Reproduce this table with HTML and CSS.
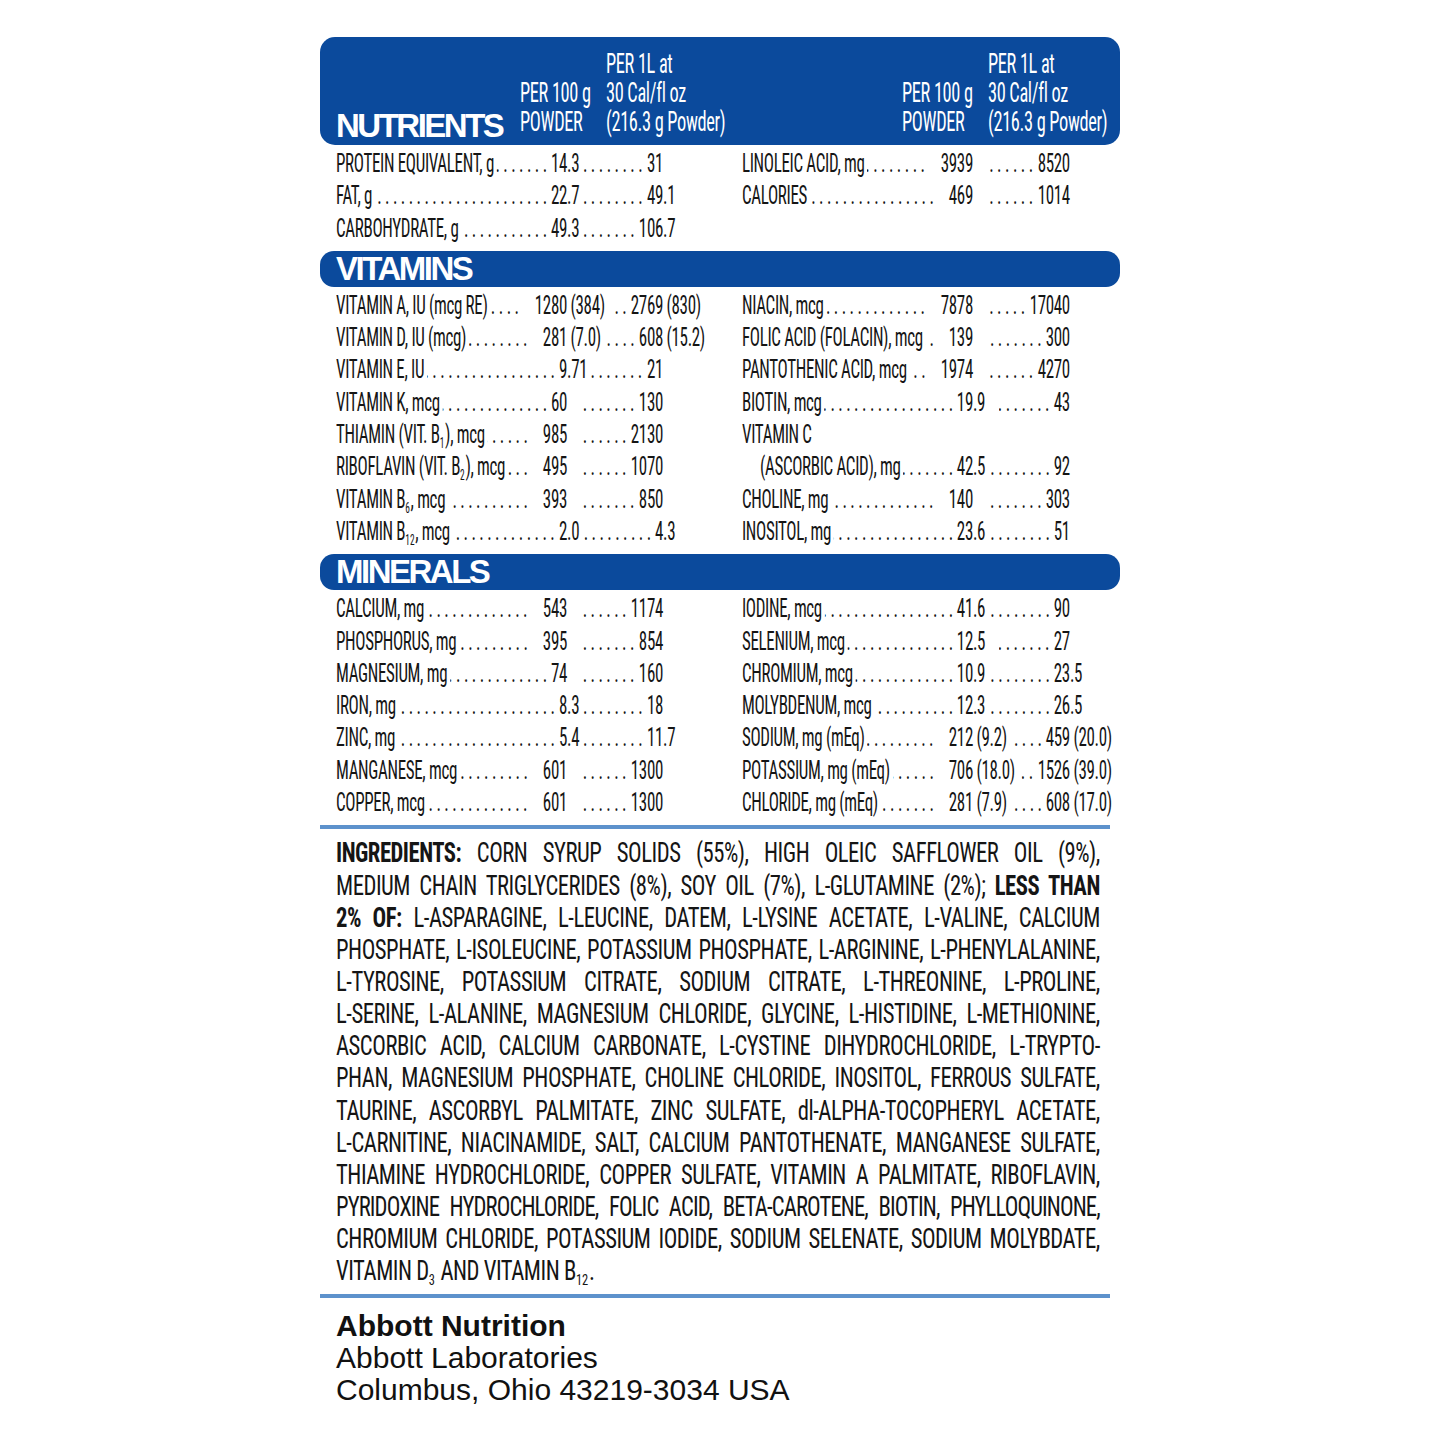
FILE: index.html
```html
<!DOCTYPE html>
<html lang="en">
<head>
<meta charset="utf-8">
<title>Nutrition label</title>
<link rel="stylesheet" href="styles.css">
</head>
<body>
<div class="label">
  <div class="head">
    <div class="title">NUTRIENTS</div>
    <div class="hcol">PER 100 g<br>POWDER</div>
    <div class="hcol">PER 1L at<br>30 Cal/fl oz<br>(216.3 g Powder)</div>
    <div class="hcol">PER 100 g<br>POWDER</div>
    <div class="hcol">PER 1L at<br>30 Cal/fl oz<br>(216.3 g Powder)</div>
  </div>

  <div class="sec">
    <div class="half">
      <div class="row"><div class="c1"><span class="nm">PROTEIN EQUIVALENT, g</span><span class="ld"></span><span class="n">14</span></div><div class="c2"><span class="n">.3</span><span class="ld"></span><span class="n">31</span></div><div class="c3"></div></div>
      <div class="row"><div class="c1"><span class="nm">FAT, g</span><span class="ld"></span><span class="n">22</span></div><div class="c2"><span class="n">.7</span><span class="ld"></span><span class="n">49</span></div><div class="c3">.1</div></div>
      <div class="row"><div class="c1"><span class="nm">CARBOHYDRATE, g</span><span class="ld"></span><span class="n">49</span></div><div class="c2"><span class="n">.3</span><span class="ld"></span><span class="n">106</span></div><div class="c3">.7</div></div>
    </div>
    <div class="half right">
      <div class="row gb ga"><div class="c1"><span class="nm">LINOLEIC ACID, mg</span><span class="ld"></span><span class="n">3939</span></div><div class="c2"><span class="ld"></span><span class="n">8520</span></div><div class="c3"></div></div>
      <div class="row gb ga"><div class="c1"><span class="nm">CALORIES</span><span class="ld"></span><span class="n">469</span></div><div class="c2"><span class="ld"></span><span class="n">1014</span></div><div class="c3"></div></div>
    </div>
  </div>

  <div class="band">VITAMINS</div>

  <div class="sec">
    <div class="half">
      <div class="row gb"><div class="c1"><span class="nm">VITAMIN A, IU (mcg RE)</span><span class="ld"></span><span class="n">1280</span></div><div class="c2"><span class="n">&nbsp;(384)&nbsp;</span><span class="ld"></span><span class="n">2769</span></div><div class="c3">&nbsp;(830)</div></div>
      <div class="row gb"><div class="c1"><span class="nm">VITAMIN D, IU (mcg)</span><span class="ld"></span><span class="n">281</span></div><div class="c2"><span class="n">&nbsp;(7.0)</span><span class="ld"></span><span class="n">608</span></div><div class="c3">&nbsp;(15.2)</div></div>
      <div class="row"><div class="c1"><span class="nm">VITAMIN E, IU</span><span class="ld"></span><span class="n">9</span></div><div class="c2"><span class="n">.71</span><span class="ld"></span><span class="n">21</span></div><div class="c3"></div></div>
      <div class="row ga"><div class="c1"><span class="nm">VITAMIN K, mcg</span><span class="ld"></span><span class="n">60</span></div><div class="c2"><span class="ld"></span><span class="n">130</span></div><div class="c3"></div></div>
      <div class="row gb ga"><div class="c1"><span class="nm">THIAMIN (VIT. B<sub>1</sub>), mcg</span><span class="ld"></span><span class="n">985</span></div><div class="c2"><span class="ld"></span><span class="n">2130</span></div><div class="c3"></div></div>
      <div class="row gb ga"><div class="c1"><span class="nm">RIBOFLAVIN (VIT. B<sub>2</sub>), mcg</span><span class="ld"></span><span class="n">495</span></div><div class="c2"><span class="ld"></span><span class="n">1070</span></div><div class="c3"></div></div>
      <div class="row gb ga"><div class="c1"><span class="nm">VITAMIN B<sub>6</sub>, mcg</span><span class="ld"></span><span class="n">393</span></div><div class="c2"><span class="ld"></span><span class="n">850</span></div><div class="c3"></div></div>
      <div class="row"><div class="c1"><span class="nm">VITAMIN B<sub>12</sub>, mcg</span><span class="ld"></span><span class="n">2</span></div><div class="c2"><span class="n">.0</span><span class="ld"></span><span class="n">4</span></div><div class="c3">.3</div></div>
    </div>
    <div class="half right">
      <div class="row gb ga"><div class="c1"><span class="nm">NIACIN, mcg</span><span class="ld"></span><span class="n">7878</span></div><div class="c2"><span class="ld"></span><span class="n">17040</span></div><div class="c3"></div></div>
      <div class="row gb ga"><div class="c1"><span class="nm">FOLIC ACID (FOLACIN), mcg</span><span class="ld"></span><span class="n">139</span></div><div class="c2"><span class="ld"></span><span class="n">300</span></div><div class="c3"></div></div>
      <div class="row gb ga"><div class="c1"><span class="nm">PANTOTHENIC ACID, mcg</span><span class="ld"></span><span class="n">1974</span></div><div class="c2"><span class="ld"></span><span class="n">4270</span></div><div class="c3"></div></div>
      <div class="row ga"><div class="c1"><span class="nm">BIOTIN, mcg</span><span class="ld"></span><span class="n">19</span></div><div class="c2"><span class="n">.9</span><span class="ld"></span><span class="n">43</span></div><div class="c3"></div></div>
      <div class="row"><div class="c1"><span class="nm">VITAMIN C</span></div><div class="c2"></div><div class="c3"></div></div>
      <div class="row"><div class="c1"><span class="nm ind">(ASCORBIC ACID), mg</span><span class="ld"></span><span class="n">42</span></div><div class="c2"><span class="n">.5</span><span class="ld"></span><span class="n">92</span></div><div class="c3"></div></div>
      <div class="row gb ga"><div class="c1"><span class="nm">CHOLINE, mg</span><span class="ld"></span><span class="n">140</span></div><div class="c2"><span class="ld"></span><span class="n">303</span></div><div class="c3"></div></div>
      <div class="row"><div class="c1"><span class="nm">INOSITOL, mg</span><span class="ld"></span><span class="n">23</span></div><div class="c2"><span class="n">.6</span><span class="ld"></span><span class="n">51</span></div><div class="c3"></div></div>
    </div>
  </div>

  <div class="band">MINERALS</div>

  <div class="sec">
    <div class="half">
      <div class="row gb ga"><div class="c1"><span class="nm">CALCIUM, mg</span><span class="ld"></span><span class="n">543</span></div><div class="c2"><span class="ld"></span><span class="n">1174</span></div><div class="c3"></div></div>
      <div class="row gb ga"><div class="c1"><span class="nm">PHOSPHORUS, mg</span><span class="ld"></span><span class="n">395</span></div><div class="c2"><span class="ld"></span><span class="n">854</span></div><div class="c3"></div></div>
      <div class="row ga"><div class="c1"><span class="nm">MAGNESIUM, mg</span><span class="ld"></span><span class="n">74</span></div><div class="c2"><span class="ld"></span><span class="n">160</span></div><div class="c3"></div></div>
      <div class="row"><div class="c1"><span class="nm">IRON, mg</span><span class="ld"></span><span class="n">8</span></div><div class="c2"><span class="n">.3</span><span class="ld"></span><span class="n">18</span></div><div class="c3"></div></div>
      <div class="row"><div class="c1"><span class="nm">ZINC, mg</span><span class="ld"></span><span class="n">5</span></div><div class="c2"><span class="n">.4</span><span class="ld"></span><span class="n">11</span></div><div class="c3">.7</div></div>
      <div class="row gb ga"><div class="c1"><span class="nm">MANGANESE, mcg</span><span class="ld"></span><span class="n">601</span></div><div class="c2"><span class="ld"></span><span class="n">1300</span></div><div class="c3"></div></div>
      <div class="row gb ga"><div class="c1"><span class="nm">COPPER, mcg</span><span class="ld"></span><span class="n">601</span></div><div class="c2"><span class="ld"></span><span class="n">1300</span></div><div class="c3"></div></div>
    </div>
    <div class="half right">
      <div class="row"><div class="c1"><span class="nm">IODINE, mcg</span><span class="ld"></span><span class="n">41</span></div><div class="c2"><span class="n">.6</span><span class="ld"></span><span class="n">90</span></div><div class="c3"></div></div>
      <div class="row ga"><div class="c1"><span class="nm">SELENIUM, mcg</span><span class="ld"></span><span class="n">12</span></div><div class="c2"><span class="n">.5</span><span class="ld"></span><span class="n">27</span></div><div class="c3"></div></div>
      <div class="row"><div class="c1"><span class="nm">CHROMIUM, mcg</span><span class="ld"></span><span class="n">10</span></div><div class="c2"><span class="n">.9</span><span class="ld"></span><span class="n">23</span></div><div class="c3">.5</div></div>
      <div class="row"><div class="c1"><span class="nm">MOLYBDENUM, mcg</span><span class="ld"></span><span class="n">12</span></div><div class="c2"><span class="n">.3</span><span class="ld"></span><span class="n">26</span></div><div class="c3">.5</div></div>
      <div class="row gb"><div class="c1"><span class="nm">SODIUM, mg (mEq)</span><span class="ld"></span><span class="n">212</span></div><div class="c2"><span class="n">&nbsp;(9.2)</span><span class="ld"></span><span class="n">459</span></div><div class="c3">&nbsp;(20.0)</div></div>
      <div class="row gb"><div class="c1"><span class="nm">POTASSIUM, mg (mEq)</span><span class="ld"></span><span class="n">706</span></div><div class="c2"><span class="n">&nbsp;(18.0)&nbsp;</span><span class="ld"></span><span class="n">1526</span></div><div class="c3">&nbsp;(39.0)</div></div>
      <div class="row gb"><div class="c1"><span class="nm">CHLORIDE, mg (mEq)</span><span class="ld"></span><span class="n">281</span></div><div class="c2"><span class="n">&nbsp;(7.9)</span><span class="ld"></span><span class="n">608</span></div><div class="c3">&nbsp;(17.0)</div></div>
    </div>
  </div>

  <div class="rule"></div>

  <p class="ingr">
    <span class="ln"><b>INGREDIENTS:</b> CORN SYRUP SOLIDS (55%), HIGH OLEIC SAFFLOWER OIL (9%),</span>
    <span class="ln">MEDIUM CHAIN TRIGLYCERIDES (8%), SOY OIL (7%), L-GLUTAMINE (2%); <b>LESS THAN</b></span>
    <span class="ln"><b>2% OF:</b> L-ASPARAGINE, L-LEUCINE, DATEM, L-LYSINE ACETATE, L-VALINE, CALCIUM</span>
    <span class="ln">PHOSPHATE, L-ISOLEUCINE, POTASSIUM PHOSPHATE, L-ARGININE, L-PHENYLALANINE,</span>
    <span class="ln">L-TYROSINE, POTASSIUM CITRATE, SODIUM CITRATE, L-THREONINE, L-PROLINE,</span>
    <span class="ln">L-SERINE, L-ALANINE, MAGNESIUM CHLORIDE, GLYCINE, L-HISTIDINE, L-METHIONINE,</span>
    <span class="ln">ASCORBIC ACID, CALCIUM CARBONATE, L-CYSTINE DIHYDROCHLORIDE, L-TRYPTO-</span>
    <span class="ln">PHAN, MAGNESIUM PHOSPHATE, CHOLINE CHLORIDE, INOSITOL, FERROUS SULFATE,</span>
    <span class="ln">TAURINE, ASCORBYL PALMITATE, ZINC SULFATE, dl-ALPHA-TOCOPHERYL ACETATE,</span>
    <span class="ln">L-CARNITINE, NIACINAMIDE, SALT, CALCIUM PANTOTHENATE, MANGANESE SULFATE,</span>
    <span class="ln">THIAMINE HYDROCHLORIDE, COPPER SULFATE, VITAMIN A PALMITATE, RIBOFLAVIN,</span>
    <span class="ln tight">PYRIDOXINE HYDROCHLORIDE, FOLIC ACID, BETA-CAROTENE, BIOTIN, PHYLLOQUINONE,</span>
    <span class="ln">CHROMIUM CHLORIDE, POTASSIUM IODIDE, SODIUM SELENATE, SODIUM MOLYBDATE,</span>
    <span class="ln last">VITAMIN D<sub>3</sub> AND VITAMIN B<sub>12</sub>.</span>
  </p>

  <div class="rule"></div>

  <div class="maker">
    <div class="co">Abbott Nutrition</div>
    <div>Abbott Laboratories</div>
    <div>Columbus, Ohio 43219-3034 USA</div>
  </div>
</div>
</body>
</html>
```
FILE: styles.css
```css
html { overflow-x: hidden; }
html, body { margin: 0; padding: 0; background: #fff; }

.label {
  width: 800px;
  margin: 37px 0 0 320px;
  font-family: "Roboto Condensed", "Roboto", "Open Sans", sans-serif;
  font-stretch: 75%;
  color: #151515;
}

/* header band */
.head {
  box-sizing: border-box;
  height: 108px;
  background: #0b4a9c;
  border-radius: 15px;
  color: #fff;
  display: grid;
  grid-template-columns: 184px 86px 296px 86px 1fr;
  align-items: end;
  padding: 0 0 8px 16px;
}
.hcol {
  font-size: 27px;
  line-height: 29px;
  letter-spacing: -0.5px;
  white-space: nowrap;
  transform: scaleX(0.68);
  transform-origin: left bottom;
}
.title, .band {
  font-family: "Liberation Sans", Arial, sans-serif;
  font-stretch: normal;
  font-weight: 700;
  font-size: 33px;
  letter-spacing: -2.5px;
}
.title { line-height: 33px; margin-bottom: -5px; }

.band {
  height: 36px;
  line-height: 36px;
  margin-top: 6px;
  padding-left: 16px;
  background: #0b4a9c;
  color: #fff;
  border-radius: 14px;
}

/* data tables: condensed type, laid out wide then compressed */
.sec {
  width: 1153px;
  margin-left: 16px;
  padding-top: 3px;
  display: grid;
  grid-template-columns: 597px 1fr;
  transform: scaleX(0.68);
  transform-origin: 0 0;
}
.row {
  display: grid;
  grid-template-columns: 339.7px 141.2px 1fr;
  font-size: 25px;
  line-height: 32.3px;
  height: 32.3px;
  letter-spacing: -0.5px;
  white-space: nowrap;
}
.right .row { grid-template-columns: 339.7px 142.6px 1fr; }
.c1, .c2 { display: flex; min-width: 0; }
.nm, .n { flex: none; }
.ind { padding-left: 26.5px; }
.ld {
  flex: 1 1 0;
  min-width: 0;
  overflow: hidden;
  direction: rtl;
  letter-spacing: 5px;
  margin: 0 1px 0 4px;
}
.ld::before {
  content: "............................................................";
}
.row.gb .c1 .ld { margin-right: 17.6px; }
.row.ga .c2 .ld { margin-left: 20.6px; }

sub {
  font-size: 55%;
  line-height: 0;
  vertical-align: -5px;
  letter-spacing: 0;
  margin-right: 1px;
}

.rule {
  width: 790px;
  height: 4px;
  background: #5d92cc;
  margin-top: 6px;
}

/* ingredients */
.ingr {
  width: 943px;
  margin: 8px 0 6px 16px;
  font-size: 28px;
  line-height: 32.15px;
  letter-spacing: -0.6px;
  transform: scaleX(0.81);
  transform-origin: 0 0;
}
.ln {
  display: block;
  white-space: nowrap;
  text-align: justify;
  text-align-last: justify;
}
.ln.last { text-align-last: left; }
.ln.tight { letter-spacing: -1.1px; word-spacing: -3px; }
.ingr b { font-weight: 700; }

/* manufacturer */
.maker {
  margin-top: 12px;
  padding-left: 16px;
  font-family: "Liberation Sans", Arial, sans-serif;
  font-stretch: normal;
  font-size: 30px;
  line-height: 32px;
  color: #111;
}
.co { font-weight: 700; }
```
